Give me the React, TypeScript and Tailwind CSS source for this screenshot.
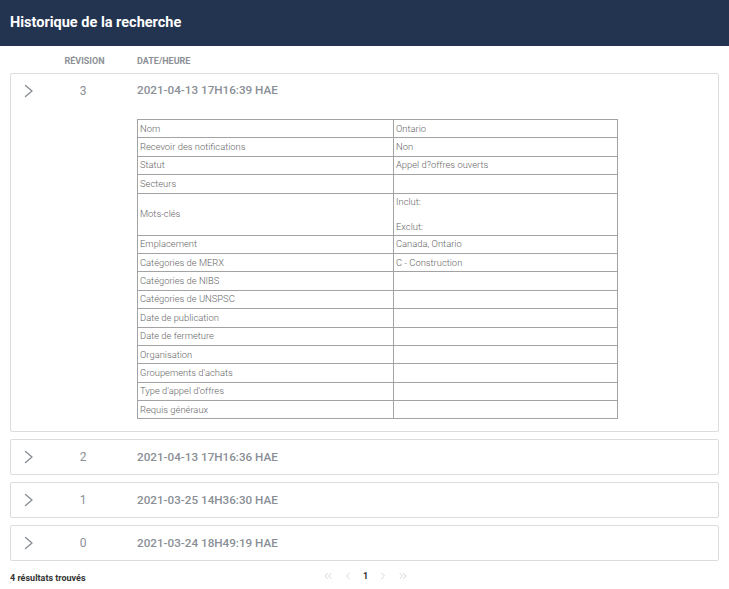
import { ChevronLeft, ChevronRight, ChevronsLeft, ChevronsRight } from 'lucide-react';

type Revision = {
    revision: number;
    date: string;
    open?: boolean;
};

const revisions: Revision[] = [
    { revision: 3, date: '2021-04-13 17H16:39 HAE', open: true },
    { revision: 2, date: '2021-04-13 17H16:36 HAE' },
    { revision: 1, date: '2021-03-25 14H36:30 HAE' },
    { revision: 0, date: '2021-03-24 18H49:19 HAE' },
];

const details: [string, string][] = [
    ['Nom', 'Ontario'],
    ['Recevoir des notifications', 'Non'],
    ['Statut', "Appel d?offres ouverts"],
    ['Secteurs', ''],
    ['Mots-clés', ''],
    ['Emplacement', 'Canada, Ontario'],
    ['Catégories de MERX', 'C - Construction'],
    ['Catégories de NIBS', ''],
    ['Catégories de UNSPSC', ''],
    ['Date de publication', ''],
    ['Date de fermeture', ''],
    ['Organisation', ''],
    ["Groupements d'achats", ''],
    ["Type d'appel d'offres", ''],
    ['Requis généraux', ''],
];

const Chevron = () => (
    <svg width="10" height="14" viewBox="0 0 10 14" fill="none">
        <polyline points="1.5,1.5 8,7 1.5,12.5" stroke="#8a8f96" strokeWidth="1.4" strokeLinecap="round" strokeLinejoin="round" />
    </svg>
);

const DetailsTable = () => {
    return (
        <table className="ml-[126px] mt-[11px] w-[481px] border-collapse text-[9.4px] text-[#666] font-light">
            <tbody>
                {details.map(([label, value]) => {
                    // mots-clés row holds two lines (inclut / exclut)
                    if (label === 'Mots-clés') {
                        return (
                            <tr key={label} className="h-[42px]">
                                <td className="w-[256px] border border-[#a3a3a3] px-[2px] align-middle">{label}</td>
                                <td className="border border-[#a3a3a3] px-[2px] align-top">
                                    <div className="pt-[2px] leading-[12px]">Inclut:</div>
                                    <div className="pt-[13px] leading-[12px]">Exclut:</div>
                                </td>
                            </tr>
                        );
                    }
                    return (
                        <tr key={label} className="h-[18.4px]">
                            <td className="w-[256px] border border-[#a3a3a3] px-[2px] leading-[12px]">{label}</td>
                            <td className="border border-[#a3a3a3] px-[2px] leading-[12px]">{value}</td>
                        </tr>
                    );
                })}
            </tbody>
        </table>
    );
};

const RevisionCard = ({ item }: { item: Revision }) => {
    return (
        <div className={`mx-[10px] rounded-[2px] border border-[#dcdcdc] bg-white ${item.open ? 'pb-[12px]' : ''}`}>
            <div className="flex h-[34px] items-center">
                <div className="w-[53px] pl-[13px] flex items-center">
                    <Chevron />
                </div>
                <div className="w-[41px] pr-[3px] text-center text-[12px] text-[#8a8f96]">{item.revision}</div>
                <div className="ml-[32px] text-[11.7px] font-medium text-[#8a8f96]">{item.date}</div>
            </div>
            {item.open && <DetailsTable />}
        </div>
    );
};

const App = () => {
    return (
        <div className="min-h-[589px] w-[729px] bg-white" style={{ fontFamily: 'Roboto, "Noto Sans", sans-serif' }}>
            <div className="flex h-[46px] items-center bg-[#233451] px-[10px]">
                <h1 className="text-[14.5px] font-bold text-white">Historique de la recherche</h1>
            </div>
            <div className="flex h-[27px] items-center pt-[4px] pl-[64px] text-[9px] font-bold uppercase text-[#8d9197]">
                <div className="w-[41px] text-center">Révision</div>
                <div className="ml-[32px]">Date/Heure</div>
            </div>
            <div className="flex flex-col gap-[7px]">
                {revisions.map((r) => (
                    <RevisionCard key={r.revision} item={r} />
                ))}
            </div>
            <div className="relative mt-[9px] flex h-[16px] items-center px-[10px]">
                <span className="text-[9px] font-bold text-[#333]">4 résultats trouvés</span>
                <div className="absolute left-[322px] top-[-2px] flex h-[16px] items-center gap-[8px] text-[#c4c7cc]">
                    <ChevronsLeft size={12} strokeWidth={1.5} />
                    <ChevronLeft size={12} strokeWidth={1.5} />
                    <span className="px-[1px] text-[9px] font-bold text-[#333]">1</span>
                    <ChevronRight size={12} strokeWidth={1.5} />
                    <ChevronsRight size={12} strokeWidth={1.5} />
                </div>
            </div>
        </div>
    );
};

export default App;
